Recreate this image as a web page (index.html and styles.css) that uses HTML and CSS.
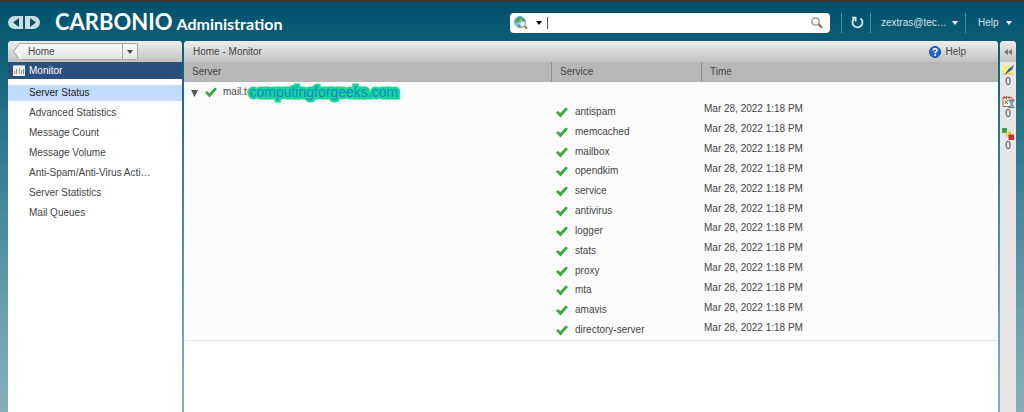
FILE: index.html
```html
<!DOCTYPE html>
<html lang="en">
<head>
    <meta charset="UTF-8">
    <meta name="viewport" content="width=device-width, initial-scale=1.0">
    <title>Carbonio Administration</title>
    <link rel="stylesheet" href="styles.css">
</head>
<body>
    <!-- shared icon -->
    <svg class="sprite" aria-hidden="true">
        <symbol id="check" viewBox="0 0 12 11">
            <path d="M0 5.800 2 4 4.300 6.200 9.800.6 12 2 4.500 10.600z" fill="#2fa138"/>
            <path d="M1.500 5.600 4.300 8 10.500 1.800" fill="none" stroke="#4fbb50"/>
        </symbol>
    </svg>

    <header class="topbar">
        <div class="history">
            <button type="button" aria-label="Back"><svg width="6" height="9" viewBox="0 0 6 9"><path d="M6 0v9L0 4.5z" fill="#0b4f69"/></svg></button>
            <button type="button" aria-label="Forward"><svg width="6" height="9" viewBox="0 0 6 9"><path d="M0 0v9l6-4.5z" fill="#0b4f69"/></svg></button>
        </div>
        <h1 class="brand"><span class="brand-name">CARBONIO</span> <span class="brand-sub">Administration</span></h1>

        <form class="search">
            <button type="button" class="search-type" aria-label="Search type">
                <svg width="14" height="14" viewBox="0 0 14 14">
                    <circle cx="6" cy="6" r="5.5" fill="#8cc6ea" stroke="#6aa5c6"/>
                    <path d="M2 3Q4 .5 7 1l1 2-2 1-1 2-3 1-1-2zM8 2l3 2-1 2-2-1zM4 8l2 1v2l-2-.5z" fill="#4aa657"/>
                    <circle cx="8.500" cy="8" r="2.800" fill="#f4fafd" stroke="#8fa5ae"/>
                    <path d="M10.5 10l2.300 2.700" stroke="#b05c2e" stroke-width="1.800"/>
                </svg>
                <svg width="6" height="4" viewBox="0 0 6 4"><path d="M0 0h6L3 4z" fill="#000"/></svg>
            </button>
            <input type="text" class="search-input" aria-label="Search">
            <button type="submit" class="search-go" aria-label="Search">
                <svg width="12" height="12" viewBox="0 0 12 12">
                    <circle cx="4.5" cy="4.5" r="3.7" fill="#f4f8fa" stroke="#8a8f94" stroke-width="1.2"/>
                    <path d="M7.5 7.3l3.5 3.5" stroke="#a5643c" stroke-width="2.2"/>
                </svg>
            </button>
        </form>

        <div class="tools">
            <button type="button" class="tool refresh" aria-label="Refresh">
                <svg width="13" height="13" viewBox="0 0 13 13" fill="none" stroke="#dcebef" stroke-width="1.8">
                    <path d="M9.5 2.4A5 5 0 1 1 3.2 2.6"/>
                    <path d="M1 1.7h3.6v3.8"/>
                </svg>
            </button>
            <button type="button" class="tool user">zextras@tec…
                <svg width="6" height="4" viewBox="0 0 6 4"><path d="M0 0h6L3 4z" fill="#fff"/></svg>
            </button>
            <button type="button" class="tool help-menu">Help
                <svg width="6" height="4" viewBox="0 0 6 4"><path d="M0 0h6L3 4z" fill="#fff"/></svg>
            </button>
        </div>
    </header>

    <div class="layout">
        <nav class="sidebar">
            <div class="bar crumb-bar">
                <div class="crumb">
                    <svg class="crumb-tip" width="9" height="17" viewBox="0 0 9 17"><path d="M9 .5H6.5L.7 8.5l5.8 8H9" fill="#f3f3f3" stroke="#a6a6a6"/></svg>
                    <button type="button" class="crumb-home">Home</button>
                    <button type="button" class="crumb-more" aria-label="More"><svg width="6" height="4" viewBox="0 0 6 4"><path d="M0 0h6L3 4z" fill="#444"/></svg></button>
                </div>
            </div>
            <h2 class="section">
                <svg width="12" height="11" viewBox="0 0 12 11">
                    <rect width="12" height="11" fill="#e8edf2"/>
                    <path d="M0 .5h12" stroke="#9cb2cc"/>
                    <path d="M1.500 6v3M6.500 3v6" stroke="#e0894a"/>
                    <path d="M3.500 4v5M8.500 5v4" stroke="#6fa588"/>
                    <path d="M10.500 4v5" stroke="#8c7fc0"/>
                </svg>
                Monitor
            </h2>
            <ul class="menu">
                <li><a href="#" class="active">Server Status</a></li>
                <li><a href="#">Advanced Statistics</a></li>
                <li><a href="#">Message Count</a></li>
                <li><a href="#">Message Volume</a></li>
                <li><a href="#">Anti-Spam/Anti-Virus Acti…</a></li>
                <li><a href="#">Server Statistics</a></li>
                <li><a href="#">Mail Queues</a></li>
            </ul>
        </nav>

        <main class="content">
            <div class="bar content-bar">
                <span>Home - Monitor</span>
                <a href="#" class="help-link">
                    <svg width="12" height="12" viewBox="0 0 12 12">
                        <circle cx="6" cy="6" r="5.5" fill="#1f66c4" stroke="#174c93"/>
                        <path d="M4 4.6Q4 2.8 6 2.8t2 1.7Q8 5.6 6.2 6.2v1" fill="none" stroke="#fff" stroke-width="1.5"/>
                        <circle cx="6.2" cy="9" r="1" fill="#fff"/>
                    </svg>
                    Help
                </a>
            </div>
            <table class="status">
                <thead>
                    <tr><th class="col-server">Server</th><th class="col-service">Service</th><th>Time</th></tr>
                </thead>
                <tbody>
                    <tr class="server-row">
                        <td colspan="3">
                            <div class="server">
                                <button type="button" class="toggle" aria-label="Collapse"><svg width="7" height="7" viewBox="0 0 7 7"><path d="M0 0h7L3.5 7z" fill="#555"/></svg></button>
                                <svg class="check"><use href="#check"/></svg>
                                <span>mail.te<span class="watermark">computingforgeeks.com</span></span>
                            </div>
                        </td>
                    </tr>
                    <tr><td></td><td><svg class="check"><use href="#check"/></svg>antispam</td><td class="time">Mar 28, 2022 1:18 PM</td></tr>
                    <tr><td></td><td><svg class="check"><use href="#check"/></svg>memcached</td><td class="time">Mar 28, 2022 1:18 PM</td></tr>
                    <tr><td></td><td><svg class="check"><use href="#check"/></svg>mailbox</td><td class="time">Mar 28, 2022 1:18 PM</td></tr>
                    <tr><td></td><td><svg class="check"><use href="#check"/></svg>opendkim</td><td class="time">Mar 28, 2022 1:18 PM</td></tr>
                    <tr><td></td><td><svg class="check"><use href="#check"/></svg>service</td><td class="time">Mar 28, 2022 1:18 PM</td></tr>
                    <tr><td></td><td><svg class="check"><use href="#check"/></svg>antivirus</td><td class="time">Mar 28, 2022 1:18 PM</td></tr>
                    <tr><td></td><td><svg class="check"><use href="#check"/></svg>logger</td><td class="time">Mar 28, 2022 1:18 PM</td></tr>
                    <tr><td></td><td><svg class="check"><use href="#check"/></svg>stats</td><td class="time">Mar 28, 2022 1:18 PM</td></tr>
                    <tr><td></td><td><svg class="check"><use href="#check"/></svg>proxy</td><td class="time">Mar 28, 2022 1:18 PM</td></tr>
                    <tr><td></td><td><svg class="check"><use href="#check"/></svg>mta</td><td class="time">Mar 28, 2022 1:18 PM</td></tr>
                    <tr><td></td><td><svg class="check"><use href="#check"/></svg>amavis</td><td class="time">Mar 28, 2022 1:18 PM</td></tr>
                    <tr><td></td><td><svg class="check"><use href="#check"/></svg>directory-server</td><td class="time">Mar 28, 2022 1:18 PM</td></tr>
                </tbody>
            </table>
        </main>

        <aside class="tray">
            <button type="button" class="bar tray-toggle" aria-label="Expand"><svg width="8" height="6" viewBox="0 0 8 6"><path d="M4 0v6L0 3zM8 0v6L4 3z" fill="#777"/></svg></button>
            <button type="button" class="tray-item" aria-label="Running tasks">
                <svg width="13" height="12" viewBox="0 0 13 12">
                    <path d="M0 1h11v9H0z" fill="#f3ef8e"/>
                    <path d="M0 10h11" stroke="#d9c95a"/>
                    <path d="M3.5 9.5L6 5.5l6-5-1.5 5L6 8.5z" fill="#3e78b5"/>
                    <path d="M3 10.5L9 4" stroke="#1f3f66"/>
                </svg>
                <span>0</span>
            </button>
            <button type="button" class="tray-item" aria-label="Pending tasks">
                <svg width="13" height="12" viewBox="0 0 13 12">
                    <path d="M1 1.5h9v9H1z" fill="#f7f7ef" stroke="#b8683c"/>
                    <path d="M2 0v3M4.500 0v3M7 0v3" stroke="#b04a3a"/>
                    <path d="M3 5l3 3M6 4L3 8" stroke="#4a9c54"/>
                    <path d="M6.500 4h6M6.500 11.500h6" stroke="#a05a34"/>
                    <path d="M7 4.500h5L10 8l2 3.500H7L9 8z" fill="#7fb4d6" stroke="#3f779c" stroke-width=".6"/>
                </svg>
                <span>0</span>
            </button>
            <button type="button" class="tray-item" aria-label="Completed tasks">
                <svg width="13" height="12" viewBox="0 0 13 12">
                    <path d="M0 0h5v5H0z" fill="#3ea443"/>
                    <path d="M4 3.500h5v5H4z" fill="#f2b51f"/>
                    <path d="M6.500 6.500H12V12H6.500z" fill="#cf2f2c"/>
                    <path d="M5.500 4v4M4 6h4" stroke="#fbe06d"/>
                </svg>
                <span>0</span>
            </button>
        </aside>
    </div>
</body>
</html>
```
FILE: styles.css
```css
* {
    box-sizing: border-box;
}

body {
    display: flex;
    flex-direction: column;
    min-height: 100vh;
    margin: 0;
    border-top: 2px solid #3b3632;
    font-family: "Liberation Sans", Arial, sans-serif;
    font-size: 10px;
    line-height: 12px;
    color: #444;
    background: linear-gradient(#00506e, #0d5f74 12%, #307990 35%, #70a0b3 78%, #86aeb7);
}

button,
input {
    margin: 0;
    padding: 0;
    border: 0;
    background: none;
    font: inherit;
    color: inherit;
}

a {
    color: inherit;
    text-decoration: none;
}

svg {
    display: block;
    flex: none;
}

.sprite {
    display: none;
}

/* Top bar */
.topbar {
    display: flex;
    align-items: center;
    height: 39px;
    padding: 2px 8px 0;
}

.history {
    display: flex;
    gap: 2px;
    width: 32px;
    height: 13px;
}

.history button {
    display: flex;
    flex: 1;
    align-items: center;
    justify-content: center;
    background: #c9dde5;
}

.history button:first-child {
    border-radius: 7px 0 0 7px;
}

.history button:last-child {
    border-radius: 0 7px 7px 0;
}

.brand {
    display: flex;
    align-items: baseline;
    gap: 4px;
    margin: 0 0 0 15px;
    line-height: 24px;
    color: #fff;
}

.brand-name {
    font-family: Lato, sans-serif;
    font-size: 22px;
    font-weight: 700;
}

.brand-sub {
    font-family: Lato, sans-serif;
    font-size: 16px;
    font-weight: 700;
}

.search {
    display: flex;
    align-items: center;
    width: 320px;
    height: 20px;
    margin-left: auto;
    padding: 0 7px 0 4px;
    border-radius: 4px;
    background: #fff;
}

.search-type {
    display: flex;
    align-items: center;
    gap: 8px;
    padding-right: 5px;
}

.search-input {
    flex: 1;
    min-width: 0;
    height: 12px;
    border-left: 1px solid #555;
    outline: none;
}

.tools {
    display: flex;
    align-items: center;
    margin-left: 11px;
    color: #d3e4ea;
}

.tool {
    display: flex;
    align-items: center;
    justify-content: space-between;
    height: 20px;
    border-left: 1px solid #4f8da0;
}

.refresh {
    width: 29px;
    padding-left: 9px;
}

.user {
    width: 95px;
    padding: 0 7px 0 10px;
}

.help-menu {
    width: 51px;
    padding: 0 4px 0 12px;
}

/* Panels */
.layout {
    display: flex;
    flex: 1;
    gap: 2px;
    padding: 0 8px;
}

.bar {
    display: flex;
    align-items: center;
    height: 21px;
    border-radius: 4px 4px 0 0;
    background: linear-gradient(#ededed, #c2c2c2);
}

.sidebar {
    width: 174px;
    border-radius: 4px 4px 0 0;
    background: #fff;
}

.crumb-bar {
    padding-left: 5px;
}

.crumb {
    display: flex;
    width: 125px;
}

.crumb-home,
.crumb-more {
    height: 17px;
    border: 1px solid #a6a6a6;
    background: linear-gradient(#fafafa, #e4e4e4);
}

.crumb-home {
    flex: 1;
    padding-left: 6px;
    border-left: 0;
    text-align: left;
}

.crumb-more {
    display: flex;
    align-items: center;
    justify-content: center;
    width: 15px;
    border-left: 0;
    border-radius: 0 2px 2px 0;
}

.section {
    display: flex;
    align-items: center;
    gap: 4px;
    height: 17px;
    margin: 0;
    padding-left: 5px;
    font-size: 10px;
    font-weight: 400;
    color: #fff;
    background: #2b507d;
}

.menu {
    display: flex;
    flex-direction: column;
    gap: 4px;
    margin: 0;
    padding: 6px 0 0;
    list-style: none;
}

.menu a {
    display: block;
    padding-left: 21px;
    line-height: 16px;
}

.menu .active {
    color: #222;
    background: #c1dbfc;
}

.content {
    flex: 1;
    border-radius: 4px 4px 0 0;
    background: #fff;
}

.content-bar {
    justify-content: space-between;
    padding: 0 32px 0 9px;
}

.help-link {
    display: flex;
    align-items: center;
    gap: 4px;
}

.status {
    width: 100%;
    height: 279px;
    border-collapse: separate;
    border-spacing: 0;
    border-bottom: 1px solid #e4e4e4;
    table-layout: fixed;
    background: #fcfcfc;
}

.status th {
    height: 20px;
    padding: 0 0 0 8px;
    border-left: 1px solid #8e8e8e;
    font-weight: 400;
    text-align: left;
    background: #b7b7b7;
}

.status .col-server {
    width: 367px;
    border-left: 0;
}

.status .col-service {
    width: 150px;
}

.status td {
    padding: 0 0 0 5px;
}

.server-row {
    height: 20px;
}

.server {
    display: flex;
    align-items: center;
}

.toggle {
    margin: 2px 7px 0 2px;
}

.check {
    display: inline-block;
    width: 12px;
    height: 11px;
    margin-right: 7px;
    vertical-align: -3px;
}

.server .check {
    margin-right: 6px;
}

.status .time {
    padding: 0 0 5px 3px;
}

/* Marker-style label over the host name */
.watermark {
    position: absolute;
    margin-left: -3px;
    font-size: 14px;
    color: #1487d4;
    -webkit-text-stroke: 5px #17d696;
    paint-order: stroke fill;
}

/* Right tray */
.tray {
    display: flex;
    flex-direction: column;
    width: 16px;
    border-radius: 4px 4px 0 0;
    background: #e7e5e6;
}

.tray-toggle {
    justify-content: center;
}

.tray-item {
    display: flex;
    flex-direction: column;
    align-items: center;
    height: 32px;
    padding-top: 2px;
}
```
